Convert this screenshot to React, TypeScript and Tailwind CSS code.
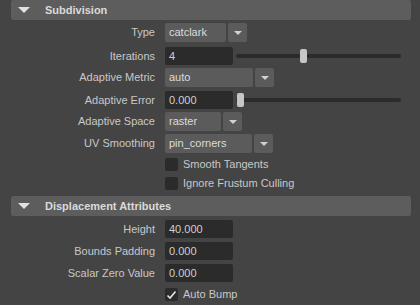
import React from "react";

const font = { fontFamily: '"Liberation Sans", Arial, sans-serif' };

function Header({ title, className = "" }: { title: string; className?: string }) {
  return (
    <div className={`ml-[11px] flex h-[20px] w-[400px] items-center rounded-[2px] bg-[#5d5d5d] ${className}`}>
      <svg width="12" height="6" viewBox="0 0 12 6" className="ml-[7px]">
        <path d="M0 0 H12 L6 6 Z" fill="#e2e2e2" />
      </svg>
      <span className="ml-[15px] text-[11px] font-bold text-[#dadada]">{title}</span>
    </div>
  );
}

function Row({ label, className = "", children }: { label?: string; className?: string; children: React.ReactNode }) {
  return (
    <div className={`flex items-center ${className}`}>
      <div className="w-[155px] text-right text-[11px] leading-none text-[#c8c8c8]">{label}</div>
      <div className="ml-[10px] flex items-center">{children}</div>
    </div>
  );
}

function Dropdown({ value, width }: { value: string; width: string }) {
  return (
    <div className="flex h-[19px] gap-[2px]">
      <div className={`flex items-center rounded-[2px] bg-[#5b5b5b] pl-[4px] text-[11px] text-[#dcdcdc] ${width}`}>{value}</div>
      <div className="flex w-[19px] items-center justify-center rounded-[2px] bg-[#5b5b5b]">
        <svg width="8" height="4" viewBox="0 0 8 4">
          <path d="M0 0 H8 L4 4 Z" fill="#d0d0d0" />
        </svg>
      </div>
    </div>
  );
}

function Field({ value }: { value: string }) {
  return (
    <div className="flex h-[18px] w-[68px] items-center rounded-[2px] bg-[#2b2b2b] pl-[4px] text-[11px] text-[#cfcfcf]">
      {value}
    </div>
  );
}

function Slider({ pos }: { pos: string }) {
  return (
    <div className="relative ml-[3px] h-[4px] w-[165px] rounded-full bg-[#2b2b2b]">
      <div className={`absolute top-[-5px] h-[14px] w-[7px] rounded-[2px] bg-[#c6c6c6] ${pos}`} />
    </div>
  );
}

function Check({ label, checked = false, className = "" }: { label: string; checked?: boolean; className?: string }) {
  return (
    <Row className={className}>
      <div className="flex h-[13px] w-[13px] items-center justify-center rounded-[2px] bg-[#2b2b2b]">
        {checked && (
          <svg width="11" height="10" viewBox="0 0 11 10">
            <path d="M1.5 5.5 L4 8 L9.5 1.5" stroke="#e6e6e6" strokeWidth="1.6" fill="none" />
          </svg>
        )}
      </div>
      <span className="ml-[5px] text-[11px] leading-none text-[#c8c8c8]">{label}</span>
    </Row>
  );
}

export default function App() {
  return (
    <div className="h-[305px] w-[420px] overflow-hidden bg-[#444444]" style={font}>
      <Header title="Subdivision" />
      <Row label="Type" className="mt-[3px]">
        <Dropdown value="catclark" width="w-[61px]" />
      </Row>
      <Row label="Iterations" className="mt-[5px]">
        <Field value="4" />
        <Slider pos="left-[64px]" />
      </Row>
      <Row label="Adaptive Metric" className="mt-[3px]">
        <Dropdown value="auto" width="w-[88px]" />
      </Row>
      <Row label="Adaptive Error" className="mt-[4px]">
        <Field value="0.000" />
        <Slider pos="left-[1px]" />
      </Row>
      <Row label="Adaptive Space" className="mt-[3px]">
        <Dropdown value="raster" width="w-[56px]" />
      </Row>
      <Row label="UV Smoothing" className="mt-[3px]">
        <Dropdown value="pin_corners" width="w-[87px]" />
      </Row>
      <Check label="Smooth Tangents" className="mt-[5px]" />
      <Check label="Ignore Frustum Culling" className="mt-[6px]" />
      <Header title="Displacement Attributes" className="mt-[6px]" />
      <Row label="Height" className="mt-[4px]">
        <Field value="40.000" />
      </Row>
      <Row label="Bounds Padding" className="mt-[4px]">
        <Field value="0.000" />
      </Row>
      <Row label="Scalar Zero Value" className="mt-[4px]">
        <Field value="0.000" />
      </Row>
      <Check label="Auto Bump" checked className="mt-[6px]" />
    </div>
  );
}
